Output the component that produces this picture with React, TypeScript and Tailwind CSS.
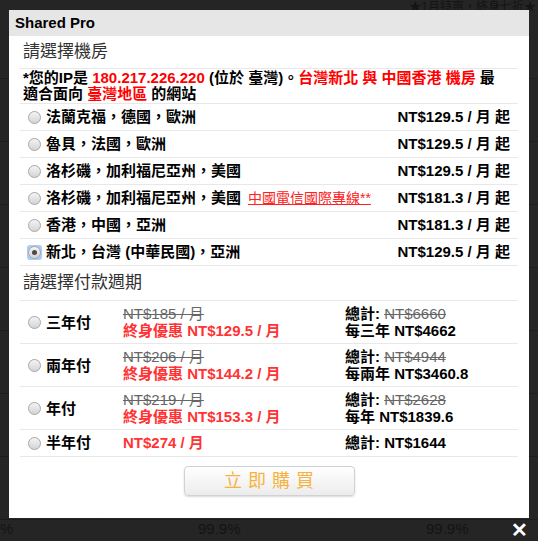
import React from "react";

const font = "font-['Liberation_Sans','Noto_Sans_CJK_TC',sans-serif]";

const Radio = ({ checked = false }: { checked?: boolean }) => (
  <span
    className={`flex h-[15px] w-[15px] shrink-0 items-center justify-center rounded-[3px] ${
      checked ? "bg-[#a9cdf7]" : ""
    }`}
  >
    <span className="flex h-[13px] w-[13px] items-center justify-center rounded-full border border-[#a6a6a6] bg-gradient-to-b from-[#f4f4f4] to-[#d4d4d4]">
      {checked && <span className="h-[5px] w-[5px] rounded-full bg-[#4a4a4a]" />}
    </span>
  </span>
);

const rooms = [
  { name: "法蘭克福，德國，歐洲", price: "NT$129.5" },
  { name: "魯貝，法國，歐洲", price: "NT$129.5" },
  { name: "洛杉磯，加利福尼亞州，美國", price: "NT$129.5" },
  { name: "洛杉磯，加利福尼亞州，美國", price: "NT$181.3", link: "中國電信國際專線**" },
  { name: "香港，中國，亞洲", price: "NT$181.3" },
  { name: "新北，台灣 (中華民國)，亞洲", price: "NT$129.5", checked: true },
];

const plans = [
  { label: "三年付", old: "NT$185 / 月", deal: "NT$129.5 / 月", total: "NT$6660", per: "每三年 NT$4662" },
  { label: "兩年付", old: "NT$206 / 月", deal: "NT$144.2 / 月", total: "NT$4944", per: "每兩年 NT$3460.8" },
  { label: "年付", old: "NT$219 / 月", deal: "NT$153.3 / 月", total: "NT$2628", per: "每年 NT$1839.6" },
];

// the darkened page behind the dialog
const Backdrop = () => (
  <div className="flex h-full flex-col text-[14px] text-[#141414]">
    <div className="flex h-[16px] items-start justify-end pr-[2px] text-[12px] leading-[14px]">
      ★1月特惠，終身七折★
    </div>
    {[0, 1, 2, 3, 4, 5, 6, 7].map((i) => (
      <div key={i} className="flex h-[63px] border-b border-[#1c1c1c]">
        <div className="w-[104px] border-r border-[#1c1c1c]" />
        <div className="w-[226px] border-r border-[#1c1c1c]" />
        <div className="flex-1" />
      </div>
    ))}
    <div className="flex flex-1 items-start">
      <div className="w-[104px] text-[15px] leading-[18px]">%</div>
      <div className="w-[226px] pl-[94px] text-[15px] leading-[18px]">99.9%</div>
      <div className="pl-[96px] text-[15px] leading-[18px]">99.9%</div>
    </div>
  </div>
);

export default function App() {
  return (
    <div className={`relative h-[541px] w-[538px] overflow-hidden bg-[#252525] ${font}`}>
      <Backdrop />

      <div className="absolute left-[9px] top-[10px] flex h-[508px] w-[520px] flex-col bg-white">
        <div className="flex h-[26px] items-center bg-[#e6e6e6] pl-[6px] text-[15px] font-bold text-black">
          Shared Pro
        </div>

        <div className="flex flex-col px-[11px]">
          <div className="flex h-[33px] items-center border-b border-[#e8e8e8] pl-[3px] text-[17px] text-[#333]">
            請選擇機房
          </div>

          <div className="flex h-[35px] flex-col justify-center border-b border-[#e8e8e8] pl-[3px] text-[15px] font-bold leading-[16px] text-black">
            <span className="whitespace-nowrap">
              *您的IP是 <span className="text-[#ff0000]">180.217.226.220</span> (位於 臺灣)。
              <span className="text-[#ff0000]">台灣新北 與 中國香港 機房</span> 最
            </span>
            <span className="whitespace-nowrap">
              適合面向 <span className="text-[#ff0000]">臺灣地區</span> 的網站
            </span>
          </div>

          {rooms.map((r, i) => (
            <div
              key={i}
              className="flex h-[27px] items-center border-b border-[#e8e8e8] pl-[7px] pr-[8px] text-[15px] font-bold text-black"
            >
              <Radio checked={r.checked} />
              <span className="ml-[4px] whitespace-nowrap">{r.name}</span>
              {r.link && (
                <span className="ml-[7px] whitespace-nowrap text-[14px] font-normal text-[#ff2020] underline">
                  {r.link}
                </span>
              )}
              <span className="ml-auto whitespace-nowrap">{r.price} / 月 起</span>
            </div>
          ))}

          <div className="flex h-[35px] items-center border-b border-[#e8e8e8] pl-[3px] text-[17px] text-[#333]">
            請選擇付款週期
          </div>

          {plans.map((p, i) => (
            <div
              key={i}
              className="flex h-[43px] items-center border-b border-[#e8e8e8] pl-[7px] text-[15px] leading-[17px]"
            >
              <Radio />
              <span className="ml-[4px] w-[77px] font-bold text-black">{p.label}</span>
              <div className="flex w-[222px] flex-col">
                <span className="text-[#666] line-through">{p.old}</span>
                <span className="font-bold text-[#ff3333]">終身優惠 {p.deal}</span>
              </div>
              <div className="flex flex-col font-bold text-black">
                <span>
                  總計: <span className="font-normal text-[#666] line-through">{p.total}</span>
                </span>
                <span>{p.per}</span>
              </div>
            </div>
          ))}

          <div className="flex h-[27px] items-center border-b border-[#e8e8e8] pl-[7px] text-[15px] font-bold">
            <Radio />
            <span className="ml-[4px] w-[77px] text-black">半年付</span>
            <span className="w-[222px] text-[#ff3333]">NT$274 / 月</span>
            <span className="text-black">總計: NT$1644</span>
          </div>

          <div className="flex justify-center pt-[9px]">
            <button className="flex h-[30px] w-[171px] items-center justify-center rounded-[4px] border border-[#d0d3d6] bg-gradient-to-b from-white to-[#ececec] pl-[6px] text-[18px] tracking-[6px] text-[#f6b23e] shadow-[0_1px_2px_rgba(0,0,0,0.15)]">
              立即購買
            </button>
          </div>
        </div>
      </div>

      <span className="absolute right-[10px] top-[520px] text-[20px] font-bold leading-[20px] text-white">
        ✕
      </span>
    </div>
  );
}
